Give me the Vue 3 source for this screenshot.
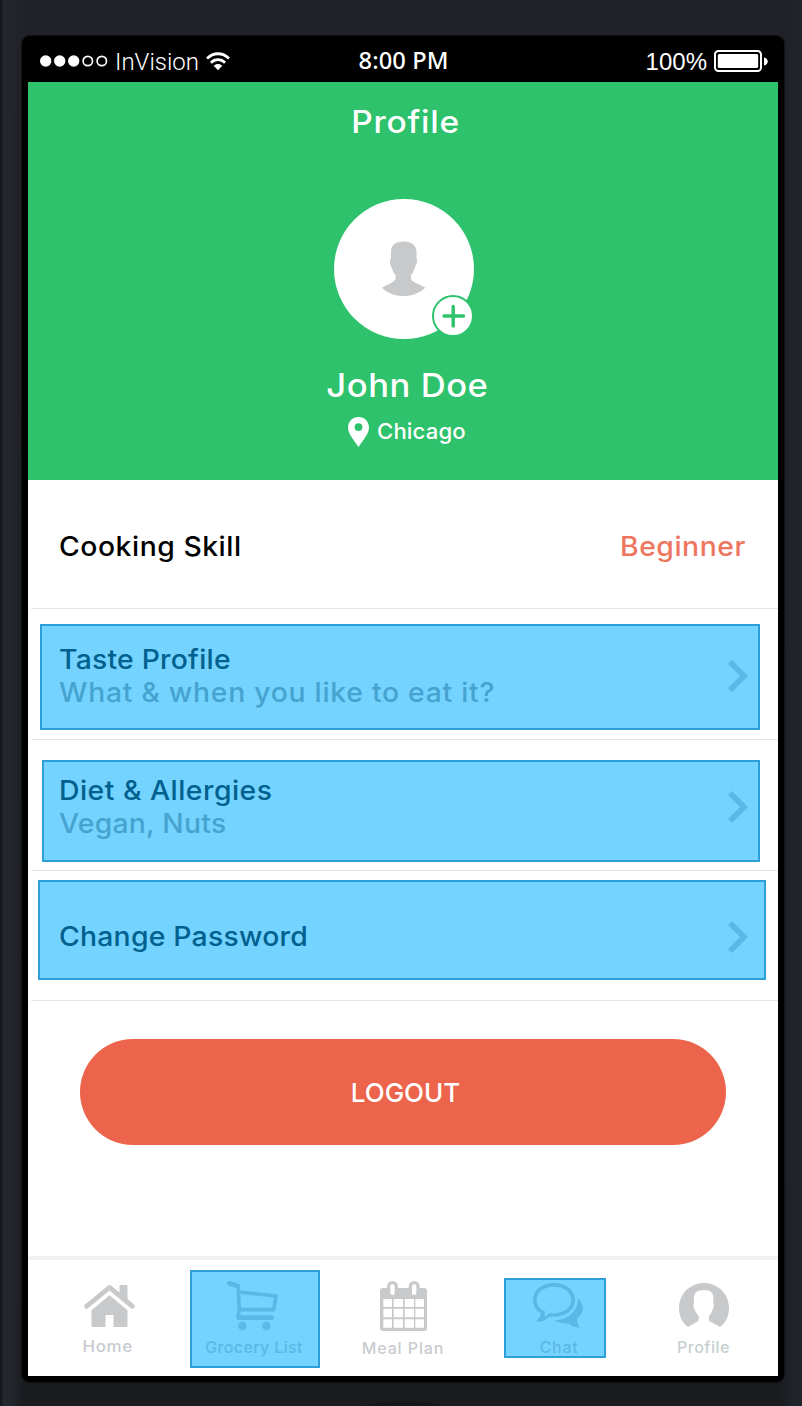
<script setup>
const rows = [
  { key: 'taste', title: 'Taste Profile', detail: 'What & when you like to eat it?' },
  { key: 'diet', title: 'Diet & Allergies', detail: 'Vegan, Nuts' },
  { key: 'password', title: 'Change Password', detail: '' },
]
</script>

<template>
  <div class="device">
    <div class="phone">
      <div class="status">
        <div class="carrier">
          <svg class="dots" width="68" height="14" viewBox="0 0 68 14">
            <g fill="#fff"><circle cx="5.7" cy="7" r="5.7" /><circle cx="19.7" cy="7" r="5.7" /><circle cx="33.7" cy="7" r="5.7" /></g>
            <g fill="none" stroke="#fff" stroke-width="1.7"><circle cx="47.8" cy="7" r="4.7" /><circle cx="61.8" cy="7" r="4.7" /></g>
          </svg>
          <span class="network">InVision</span>
          <svg class="wifi" width="24" height="19" viewBox="0 0 24 19">
            <g fill="none" stroke="#fff" stroke-width="2.8">
              <path d="M1 6.6C7.5.1 16.5.1 23 6.6" />
              <path d="M4.9 10.7C9 6.7 15 6.7 19.1 10.7" />
            </g>
            <path d="M7.7 13.8c2.5-2.3 6.1-2.3 8.6 0L12 18.3z" fill="#fff" />
          </svg>
        </div>
        <span class="time">8:00 PM</span>
        <div class="power">
          <span class="percent">100%</span>
          <svg width="54" height="22" viewBox="0 0 54 22">
            <rect x="1" y="1" width="46" height="20" rx="3.5" fill="none" stroke="#fff" stroke-width="2" />
            <rect x="3.8" y="4" width="40.4" height="14" rx="1.5" fill="#fff" />
            <path d="M50 7.5c5 1 5 7 0 8z" fill="#fff" />
          </svg>
        </div>
      </div>

      <div class="screen">
        <header class="header">
          <h1 class="title">Profile</h1>
          <div class="avatar">
            <svg width="140" height="140" viewBox="0 0 140 140">
              <path d="M69.5 42.500C60.500 42.500 57 47 57 53v6.500c-1.700 1-1.200 6.500.3 8 1 4 2.500 6.500 4.200 8.500v4.500c-3 3.500-8.200 5-13.500 8.200C59 99.800 79.500 99.800 91.300 88.700c-5.300-3.200-11.300-4.700-14.300-8.200V76c1.700-2 3.200-4.500 4.200-8.500 1.500-1.500 2.800-7 1.300-8V53C82.500 47 78.500 42.500 69.500 42.500z" fill="#c8c9cb" />
            </svg>
            <span class="add">
              <svg width="38" height="38" viewBox="0 0 38 38"><path d="M10 19h19.500M19.200 9.500v19.500" stroke="#2dc26b" stroke-width="3.4" stroke-linecap="round" /></svg>
            </span>
          </div>
          <h2 class="name">John Doe</h2>
          <div class="place">
            <svg width="21" height="30" viewBox="0 0 21 30"><path fill-rule="evenodd" fill="#fff" d="M10.5 0C4.3 0 0 4.8 0 10.5 0 17 6.2 23 10.5 30 14.8 23 21 17 21 10.5 21 4.8 16.7 0 10.5 0zm0 6.2a3.9 3.9 0 1 1 0 7.800 3.900 3.900 0 0 1 0-7.800z" /></svg>
            <span>Chicago</span>
          </div>
        </header>

        <section class="row skill">
          <span class="label">Cooking Skill</span>
          <span class="level">Beginner</span>
        </section>

        <section v-for="r in rows" :key="r.key" class="row linked" :class="r.key">
          <div class="hotspot"></div>
          <div class="copy">
            <div class="label">{{ r.title }}</div>
            <div v-if="r.detail" class="detail">{{ r.detail }}</div>
          </div>
          <svg class="chevron" width="20" height="32" viewBox="0 0 20 32"><path d="M0 4l4-4 16 16L4 32l-4-4 12-12z" fill="#5bb8e6" /></svg>
        </section>

        <button class="logout">LOGOUT</button>

        <nav class="tabs">
          <a class="tab home">
            <svg width="56" height="52" viewBox="178.5 120 168 156">
              <path d="M267 166l54 45v46q0 4-4 4h-38v-36h-24v36h-38q-4 0-4-4v-46z" fill="#c8c9cb" />
              <path d="M198 200l69-57 69 57" fill="none" stroke="#fff" stroke-width="25" />
              <path d="M297 165v-27q0-3 3-3h18q3 0 3 3v48z" fill="#c8c9cb" />
              <path d="M198 199l69-57 69 57" fill="none" stroke="#c8c9cb" stroke-width="14" stroke-linecap="round" stroke-linejoin="round" />
            </svg>
            <span>Home</span>
          </a>
          <a class="tab grocery">
            <div class="hotspot"></div>
            <svg width="56" height="52" viewBox="618 120 168 156">
              <g fill="none" stroke="#5bb8e6" stroke-linecap="round" stroke-linejoin="round">
                <path stroke-width="14" d="M628 130l25 8" />
                <path stroke-width="11" d="M654 138l4 70-4 24" />
                <path stroke-width="11" d="M656 156l112 12-7 41h-102" />
                <path stroke-width="14" d="M655 233h100" />
              </g>
              <g fill="#5bb8e6"><circle cx="667" cy="258" r="12.5" /><circle cx="739" cy="258" r="12.5" /></g>
            </svg>
            <span>Grocery List</span>
          </a>
          <a class="tab meal">
            <svg width="56" height="52" viewBox="105 120 168 156">
              <rect x="120" y="144" width="141" height="129" rx="9" fill="#c8c9cb" />
              <rect x="141" y="123" width="33" height="50" rx="16" fill="#c8c9cb" />
              <rect x="206" y="123" width="33" height="50" rx="16" fill="#c8c9cb" />
              <g fill="#fff">
                <rect x="151" y="133" width="13" height="32" rx="6" />
                <rect x="216" y="133" width="13" height="32" rx="6" />
                <path d="M130 177h26v24h-26zM161 177h28v24h-28zM194 177h28v24h-28zM226 177h26v24h-26zM130 206h26v26h-26zM161 206h28v26h-28zM194 206h28v26h-28zM226 206h26v26h-26zM130 238h26v25h-26zM161 238h28v25h-28zM194 238h28v25h-28zM226 238h26v25h-26z" />
              </g>
            </svg>
            <span>Meal Plan</span>
          </a>
          <a class="tab chat">
            <div class="hotspot"></div>
            <svg width="56" height="52" viewBox="573 120 168 156">
              <path d="M714 175c20 20 20 42-3 61 1 14 4 22 10 27-16 0-27-5-37-13-17 1-31-3-41-9 41-1 72-28 71-66z" fill="#5bb8e6" />
              <path fill-rule="evenodd" fill="#5bb8e6" d="M642 129c-36 0-63 21-63 51 0 18 9 31 24 40-2 11-8 19-16 25 19 1 31-5 40-15 45 4 78-17 78-50 0-30-27-51-63-51zm0 11c30 0 52 17 52 40 0 25-27 43-66 40l-14 12 1-18c-16-7-25-19-25-34 0-23 22-40 52-40z" />
            </svg>
            <span>Chat</span>
          </a>
          <a class="tab profile">
            <svg width="56" height="52" viewBox="165 120 168 156">
              <path d="M204 261C184 246 177 226 177 204c0-43 34-75 75-75s75 32 75 75c0 22-7 42-27 57l-33-19v-14c7-8 10-14 11-21 4-4 5-14 2-18v-14c0-16-6-25-28-25s-30 9-30 25v14c-3 4-2 14 2 18 1 7 4 13 12 21v14z" fill="#c8c9cb" />
            </svg>
            <span>Profile</span>
          </a>
        </nav>
      </div>
    </div>
    <svg class="button-edge" width="90" height="6" viewBox="0 0 90 6"><path d="M4 6Q45-4 86 6z" fill="#141519" /></svg>
  </div>
</template>

<style>
body {
  margin: 0;
}
</style>

<style scoped>
* {
  box-sizing: border-box;
}
.device {
  position: relative;
  width: 802px;
  height: 1406px;
  padding: 36px 18px 24px 22px;
  overflow: hidden;
  background:
    linear-gradient(90deg, #17181c 0, #17181c 2px, #25272f 3px, #22242b 14px, transparent 24px, transparent 780px, #1f222a 790px, #22242b 802px),
    linear-gradient(180deg, #212227 0, #1e2026 50%, #1a1b1f 100%);
  font-family: Inter, "Liberation Sans", sans-serif;
}
.phone {
  height: 1346px;
  padding: 0 6px 6px;
  border-radius: 8px;
  background: #000;
  box-shadow: 0 0 1px 1px #111216;
}
.status {
  display: flex;
  align-items: center;
  height: 46px;
  padding: 0 10px 0 12px;
  color: #fff;
  white-space: nowrap;
}
.carrier {
  display: flex;
  align-items: center;
  width: 318.5px;
  height: 46px;
}
.dots {
  position: relative;
  top: 2px;
}
.network {
  width: 90px;
  padding: 7px 0 0 7px;
  font: 300 24px/41px Roboto, sans-serif;
  letter-spacing: 0;
}
.wifi {
  margin: 4px 0 0 8px;
}
.time {
  padding-top: 2px;
  font: 500 23.7px/46px "Noto Sans", sans-serif;
  letter-spacing: 0.1px;
}
.power {
  display: flex;
  align-items: center;
  gap: 7px;
  margin-left: auto;
  padding-top: 5px;
}
.percent {
  font: 24px/41px "Liberation Sans", sans-serif;
}
.power svg {
  margin-top: -1px;
}
.screen {
  height: 1294px;
  background: #fff;
}
.header {
  display: flex;
  flex-direction: column;
  align-items: center;
  height: 398px;
  padding-top: 20px;
  background: #2dc26b;
  color: #fff;
}
.title {
  margin: 0;
  padding-left: 5px;
  font-size: 31px;
  font-weight: 500;
  line-height: 40px;
  letter-spacing: 0.7px;
  transform: scaleX(1.08);
}
.avatar {
  position: relative;
  width: 140px;
  height: 140px;
  margin: 57px 0 0 2px;
  border-radius: 50%;
  background: #fff;
}
.avatar svg {
  display: block;
}
.add {
  position: absolute;
  left: 98px;
  top: 96px;
  border: 2px solid #2dc26b;
  border-radius: 50%;
  background: #fff;
}
.name {
  margin: 27px 0 0;
  padding-left: 9px;
  font-size: 32px;
  font-weight: 500;
  line-height: 40px;
  letter-spacing: 0.51px;
  transform: scaleX(1.08);
}
.place {
  display: flex;
  align-items: center;
  gap: 8px;
  margin-top: 11px;
  padding-left: 5px;
  font-size: 21.5px;
  font-weight: 450;
  line-height: 30px;
  letter-spacing: 0.15px;
}
.place span {
  margin-top: -2px;
  transform: scaleX(1.03);
  transform-origin: left;
}
.row {
  position: relative;
  display: flex;
  justify-content: space-between;
  height: 131px;
  margin-left: 3px;
  padding: 34px 30px 0 28px;
  border-bottom: 1px solid #e6e6e6;
  font-size: 27px;
  font-weight: 450;
  line-height: 33px;
  white-space: nowrap;
}
.label,
.detail {
  transform: scaleX(1.05);
  transform-origin: left;
}
.skill {
  height: 129px;
  padding-top: 50px;
  padding-right: 32px;
  color: #000;
  letter-spacing: 0.5px;
}
.level {
  color: #ee7660;
  transform: scaleX(1.05);
  transform-origin: right;
}
.copy,
.chevron {
  position: relative;
}
.linked .label {
  color: #00618f;
  letter-spacing: 0.21px;
}
.detail {
  color: #46a3d0;
  letter-spacing: 0.21px;
}
.taste .detail {
  letter-spacing: 0.68px;
}
.diet .label {
  letter-spacing: 0.47px;
}
.chevron {
  margin-top: 17px;
}
.password {
  height: 130px;
  padding-top: 49px;
}
.password .chevron {
  margin-top: 1px;
}
.hotspot {
  position: absolute;
  border: 2px solid #2f9fd9;
  background: #75d3ff;
}
.taste .hotspot {
  left: 9px;
  top: 15px;
  width: 720px;
  height: 106px;
}
.diet .hotspot {
  left: 11px;
  top: 20px;
  width: 718px;
  height: 102px;
}
.password .hotspot {
  left: 7px;
  top: 9px;
  width: 728px;
  height: 100px;
}
.logout {
  display: block;
  width: 646px;
  height: 106px;
  margin: 38px 0 111px 52px;
  padding: 2px 0 0 5px;
  border: 0;
  border-radius: 53px;
  background: #ec644b;
  color: #fff;
  font: 450 26px/40px Inter, sans-serif;
}
.tabs {
  display: grid;
  grid-template-columns: 159px 134px 164px 147px 142px;
  height: 120px;
  border-top: 4px solid #f1f1f1;
}
.tab {
  position: relative;
  display: flex;
  flex-direction: column;
  align-items: center;
  padding-top: 20px;
  color: #c9cbce;
  font-size: 16px;
  font-weight: 500;
  line-height: 20px;
  white-space: nowrap;
}
.tab svg {
  position: relative;
  flex: none;
}
.tab span {
  position: relative;
  margin-top: 5px;
}
.home span {
  margin-top: 4px;
  padding-left: 1px;
  letter-spacing: 0.5px;
  transform: scaleX(1.06);
}
.grocery span {
  letter-spacing: 0.38px;
}
.meal span {
  margin-top: 6px;
  letter-spacing: 0.9px;
}
.chat span {
  padding-left: 1px;
  letter-spacing: 0.68px;
}
.profile span {
  padding-left: 1px;
  color: #c5d0cf;
  letter-spacing: 0.5px;
}
.grocery,
.chat {
  color: #5bb8e6;
}
.grocery .hotspot {
  left: 3px;
  top: 10px;
  width: 130px;
  height: 98px;
}
.chat .hotspot {
  left: 19px;
  top: 18px;
  width: 102px;
  height: 80px;
}
.button-edge {
  position: absolute;
  left: 358px;
  bottom: 0;
}
</style>
